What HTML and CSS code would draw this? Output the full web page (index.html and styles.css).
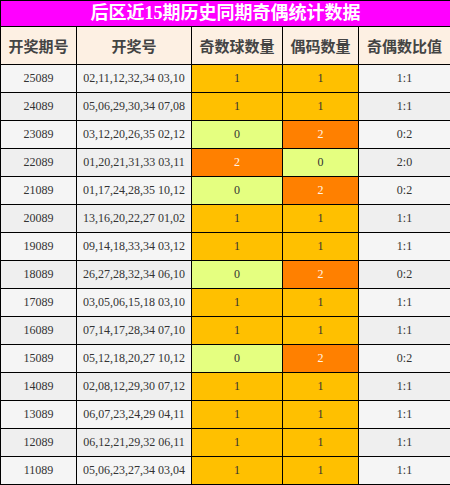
FILE: index.html
```html
<!DOCTYPE html>
<html lang="zh">
<head>
    <meta charset="UTF-8">
    <title>后区近15期历史同期奇偶统计数据</title>
    <link rel="stylesheet" href="styles.css">
</head>
<body>
    <table class="stats-table">
        <colgroup>
            <col class="col-issue">
            <col class="col-nums">
            <col class="col-odd">
            <col class="col-even">
            <col class="col-ratio">
        </colgroup>
        <thead>
            <tr class="title-row">
                <th colspan="5">后区近15期历史同期奇偶统计数据</th>
            </tr>
            <tr class="head-row">
                <th>开奖期号</th>
                <th>开奖号</th>
                <th>奇数球数量</th>
                <th>偶码数量</th>
                <th>奇偶数比值</th>
            </tr>
        </thead>
        <tbody>
            <tr class="light"><td>25089</td><td>02,11,12,32,34 03,10</td><td class="v1">1</td><td class="v1">1</td><td>1:1</td></tr>
            <tr class="dark"><td>24089</td><td>05,06,29,30,34 07,08</td><td class="v1">1</td><td class="v1">1</td><td>1:1</td></tr>
            <tr class="light"><td>23089</td><td>03,12,20,26,35 02,12</td><td class="v0">0</td><td class="v2">2</td><td>0:2</td></tr>
            <tr class="dark"><td>22089</td><td>01,20,21,31,33 03,11</td><td class="v2">2</td><td class="v0">0</td><td>2:0</td></tr>
            <tr class="light"><td>21089</td><td>01,17,24,28,35 10,12</td><td class="v0">0</td><td class="v2">2</td><td>0:2</td></tr>
            <tr class="dark"><td>20089</td><td>13,16,20,22,27 01,02</td><td class="v1">1</td><td class="v1">1</td><td>1:1</td></tr>
            <tr class="light"><td>19089</td><td>09,14,18,33,34 03,12</td><td class="v1">1</td><td class="v1">1</td><td>1:1</td></tr>
            <tr class="dark"><td>18089</td><td>26,27,28,32,34 06,10</td><td class="v0">0</td><td class="v2">2</td><td>0:2</td></tr>
            <tr class="light"><td>17089</td><td>03,05,06,15,18 03,10</td><td class="v1">1</td><td class="v1">1</td><td>1:1</td></tr>
            <tr class="dark"><td>16089</td><td>07,14,17,28,34 07,10</td><td class="v1">1</td><td class="v1">1</td><td>1:1</td></tr>
            <tr class="light"><td>15089</td><td>05,12,18,20,27 10,12</td><td class="v0">0</td><td class="v2">2</td><td>0:2</td></tr>
            <tr class="dark"><td>14089</td><td>02,08,12,29,30 07,12</td><td class="v1">1</td><td class="v1">1</td><td>1:1</td></tr>
            <tr class="light"><td>13089</td><td>06,07,23,24,29 04,11</td><td class="v1">1</td><td class="v1">1</td><td>1:1</td></tr>
            <tr class="dark"><td>12089</td><td>06,12,21,29,32 06,11</td><td class="v1">1</td><td class="v1">1</td><td>1:1</td></tr>
            <tr class="light"><td>11089</td><td>05,06,23,27,34 03,04</td><td class="v1">1</td><td class="v1">1</td><td>1:1</td></tr>
        </tbody>
    </table>
</body>
</html>
```

FILE: styles.css
```css
body {
    margin: 0;
    background-color: #ffffff;
}
.stats-table {
    width: 450px;
    border-collapse: collapse;
    table-layout: fixed;
    font-family: "Liberation Serif", "Noto Sans CJK SC", serif;
}
.col-issue { width: 76px; }
.col-nums { width: 115px; }
.col-odd { width: 91px; }
.col-even { width: 76px; }
.col-ratio { width: 92px; }

.stats-table th,
.stats-table td {
    border: 1px solid #000;
    padding: 0;
    text-align: center;
}
.title-row th {
    height: 25px;
    background-color: #ff00ff;
    color: #ffffff;
    font-size: 18px;
    font-weight: bold;
    line-height: 25px;
}
.head-row th {
    height: 37px;
    background-color: #fdf0e3;
    color: #444;
    font-family: "Noto Sans CJK SC", sans-serif;
    font-size: 15px;
    font-weight: bold;
}
.stats-table td {
    height: 27px;
    font-size: 12px;
    color: #333;
}
.light td { background-color: #f5f5f5; }
.dark td { background-color: #efefef; }
.stats-table td.v1 { background-color: #ffc000; }
.stats-table td.v0 { background-color: #e5ff80; }
.stats-table td.v2 {
    background-color: #ff8000;
    color: #fff5e8;
}
```
